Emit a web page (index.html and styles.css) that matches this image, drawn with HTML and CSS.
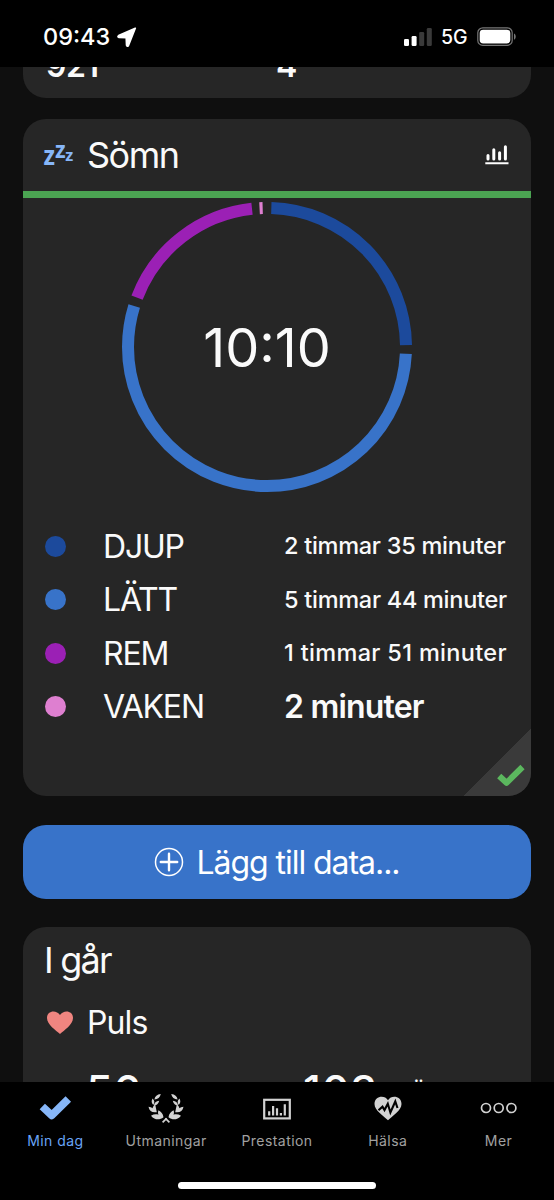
FILE: index.html
```html
<!DOCTYPE html>
<html lang="sv">
<head>
<meta charset="utf-8">
<title>Min dag</title>
<link rel="stylesheet" href="styles.css">
</head>
<body>
<div class="phone">
  <header class="status">
    <div class="status-left">
      <span class="clock">09:43</span>
      <svg class="location" width="20" height="20" viewBox="0 0 20 20"><path d="M18.300 1.200 1.600 8.600c-1 .5-.8 1.700.3 1.800l7.300.3.300 7.600c.1 1.100 1.400 1.300 1.900.3z" fill="#fff" stroke="#fff" stroke-width="1.600" stroke-linejoin="round"/></svg>
    </div>
    <div class="status-right">
      <svg class="signal" width="28" height="18" viewBox="0 0 28 18"><rect x="0" y="11" width="5" height="7" rx="1.300" fill="#fff"/><rect x="7.600" y="8" width="5" height="10" rx="1.300" fill="#fff"/><rect x="15.200" y="4" width="5" height="14" rx="1.300" fill="#3a3a3a"/><rect x="22.800" y="0" width="5" height="18" rx="1.300" fill="#3a3a3a"/></svg>
      <span class="network">5G</span>
      <svg class="battery" width="40" height="20" viewBox="0 0 40 20"><rect x=".8" y=".8" width="34.400" height="17.600" rx="5" fill="none" stroke="#777" stroke-width="1.200"/><rect x="2.700" y="2.700" width="30.600" height="13.800" rx="3.400" fill="#fff"/><path d="M37 6.500c2.300 1 2.300 5.200 0 6.200z" fill="#777"/></svg>
    </div>
  </header>

  <main class="feed">
    <section class="card card-prev">
      <span class="stat">921</span><span class="stat">4</span>
    </section>

    <section class="card card-sleep">
      <div class="card-head">
        <svg class="zzz" width="44" height="26" viewBox="0 0 44 26" fill="#86b6f8">
          <text class="z" font-size="26.500" transform="translate(.6 22.700) scale(.88 1)">z</text>
          <text class="z" font-size="22.500" transform="translate(12 15.600) scale(.96 1)">z</text>
          <text class="z" font-size="16.500" transform="translate(22.200 18.800) scale(.98 1)">z</text>
        </svg>
        <h2 class="title sleep-title">Sömn</h2>
        <svg class="chart-icon" width="24" height="20" viewBox="0 0 24 20"><g stroke="#fff" stroke-width="3" stroke-linecap="round"><path d="M3 10.500v3.600M8.800 4.800v9.300M14.600 7.800v6.300M20.400 1.800v12.300"/></g><path d="M.3 18.300h23.200" stroke="#fff" stroke-width="1.900"/></svg>
      </div>
      <div class="ring">
        <svg class="ring-svg" width="290" height="290" viewBox="0 0 290 290">
          <g class="arcs" transform="rotate(-90 145 145)" fill="none" stroke-width="12">
            <circle cx="145" cy="145" r="139" pathLength="360" stroke="#1c4a9c" stroke-dasharray="87.400 272.600" stroke-dashoffset="-1.800"/>
            <circle cx="145" cy="145" r="139" pathLength="360" stroke="#3873c9" stroke-dasharray="194.400 165.600" stroke-dashoffset="-92.800"/>
            <circle cx="145" cy="145" r="139" pathLength="360" stroke="#9b20b5" stroke-dasharray="63 297" stroke-dashoffset="-290.800"/>
            <circle cx="145" cy="145" r="139" pathLength="360" stroke="#de7fd0" stroke-dasharray="1.300 358.700" stroke-dashoffset="-356.900"/>
          </g>
        </svg>
        <span class="total">10:10</span>
      </div>
      <ul class="legend">
        <li class="row"><i class="dot deep"></i><span class="name">DJUP</span><span class="value">2 timmar 35 minuter</span></li>
        <li class="row"><i class="dot light"></i><span class="name">LÄTT</span><span class="value">5 timmar 44 minuter</span></li>
        <li class="row"><i class="dot rem"></i><span class="name">REM</span><span class="value wide">1 timmar 51 minuter</span></li>
        <li class="row"><i class="dot awake"></i><span class="name">VAKEN</span><span class="value large">2 minuter</span></li>
      </ul>
      <div class="corner">
        <svg class="corner-check" width="30" height="24" viewBox="0 0 30 24"><path d="M3.200 13 10.500 19.800 26.500 4" fill="none" stroke="#5bb75e" stroke-width="6" stroke-linejoin="round"/></svg>
      </div>
    </section>

    <button class="add">
      <svg class="plus" width="30" height="30" viewBox="0 0 30 30" fill="none" stroke="#fff"><circle cx="15" cy="15" r="13.500" stroke-width="1.500"/><path d="M15 6.800v16.400M6.800 15h16.400" stroke-width="2.400" stroke-linecap="round"/></svg>
      <span class="add-text">Lägg till data...</span>
    </button>

    <section class="card card-yesterday">
      <h2 class="title day">I går</h2>
      <div class="pulse-head">
        <svg class="heart" width="28" height="24" viewBox="0 0 28 24"><path d="M14 23C10 19.500 1 13.500 1 7c0-7.500 9.500-8.400 13-2.900C17.500-1.400 27-.5 27 7c0 6.500-9 12.500-13 16z" fill="#f08580"/></svg>
        <span class="pulse-name">Puls</span>
      </div>
      <div class="pulse-values"><span class="big low">56</span><span class="big high">103</span><span class="unit">HÖG</span></div>
    </section>
  </main>

  <nav class="tabs">
    <a class="tab active"><svg class="tab-icon" width="40" height="32" viewBox="0 0 40 32"><path d="M6.500 16.500 16 25.300 32.500 9" transform="translate(.8 -2)" fill="none" stroke="#86b6f8" stroke-width="7.800" stroke-linejoin="round"/></svg><span class="tab-label">Min dag</span></a>
    <a class="tab"><svg class="tab-icon" width="40" height="32" viewBox="0 0 40 32">
      <defs><g id="branch"><path d="M14.800 2C11 2.500 9 4.300 8.400 7.500 12 7.200 14 5.500 14.800 2zM6.500 6.500c-1.400 2.700-1 4.600.8 6.500 1.600-2.200 1.400-4.500-.8-6.500zM13.200 8.700c-3.200.4-5 2-5.300 4.700 2.800 0 4.600-1.700 5.300-4.700zM2.500 14.700c.8 4.300 3.700 6.300 8.300 5.500l-1.600-7.700c-2 1.500-2.400 2.500-2.500 3.700-1.200-.8-2.500-1.400-4.200-1.500zM5 23.700c3.800 4.500 8.500 4.700 12.500 1.500-.5-3.500-2.400-5.700-5-7-.7 1.700-.6 3.100 0 4.500-2.500-.7-5-.4-7.500 1z"/><path d="M16.600 30.400 20.600 26.400" fill="none" stroke="#d2d2d2" stroke-width="1.700"/></g></defs>
      <g fill="#d2d2d2"><use href="#branch"/><use href="#branch" transform="matrix(-1 0 0 1 40 0)"/></g></svg><span class="tab-label">Utmaningar</span></a>
    <a class="tab"><svg class="tab-icon" width="40" height="32" viewBox="0 0 40 32"><rect x="7.200" y="7.800" width="25.600" height="18.600" fill="none" stroke="#d2d2d2" stroke-width="2.200"/><path d="M12.200 19.300v4.200M16.100 14v9.500M20 16.300v7.200M23.900 21v2.500M27.800 12.300v11.200" stroke="#d2d2d2" stroke-width="2.200"/></svg><span class="tab-label">Prestation</span></a>
    <a class="tab"><svg class="tab-icon" width="40" height="32" viewBox="0 0 40 32"><path d="M20 28.200C16 24.200 6.500 18.700 6.500 12 6.500 4.200 16.500 2.500 20 8.300c3.500-5.800 13.500-4.100 13.500 3.700C33.500 18.700 24 24.200 20 28.200z" fill="#d2d2d2"/><path d="M10.500 18.200 14.500 14.700l2 3.300L19.800 11.700l2.600 8.800L27.300 9.500l2.200 6.500" fill="none" stroke="#000" stroke-width="2.100"/></svg><span class="tab-label">Hälsa</span></a>
    <a class="tab"><svg class="tab-icon" width="40" height="32" viewBox="0 0 40 32" fill="none" stroke="#d2d2d2" stroke-width="1.700"><circle cx="7" cy="16" r="4.500"/><circle cx="19.700" cy="16" r="4.500"/><circle cx="32.400" cy="16" r="4.500"/></svg><span class="tab-label">Mer</span></a>
    <div class="home-bar"></div>
  </nav>
</div>
</body>
</html>
```
FILE: styles.css
```css
* { box-sizing: border-box; }
body { margin: 0; background: #0f0f0f; color: #fafafa; font-family: Inter, "Liberation Sans", sans-serif; }
.phone { width: 554px; height: 1200px; display: flex; flex-direction: column; overflow: hidden; }

.status { height: 67px; flex: none; background: #000; display: flex; justify-content: space-between; padding: 17px 37px 10px 43px; color: #fff; }
.status-left, .status-right { display: flex; align-items: center; height: 40px; }
.clock { width: 74px; font-size: 23.5px; font-weight: 550; line-height: 40px; letter-spacing: 0; }
.network { width: 36px; margin-left: 9px; font-size: 19.5px; font-weight: 500; line-height: 40px; }

.feed { height: 1015px; flex: none; overflow: hidden; padding: 0 23px; }
.card { background: #262626; border-radius: 23px; }
.card-prev { height: 31px; border-radius: 0 0 23px 23px; display: grid; grid-template-columns: 230px 1fr; padding-left: 23px; overflow: hidden; }
.stat { font-size: 32px; font-weight: 600; line-height: 40px; margin-top: -21.5px; letter-spacing: -.4px; }

.card-sleep { position: relative; height: 677px; margin-top: 21px; overflow: hidden; }
.card-head { height: 78.5px; display: flex; align-items: center; padding: 0 22px 0 20px; border-bottom: 7px solid #4ba452; }
.title { margin: 0; font-size: 36px; font-weight: 375; line-height: 44px; }
.sleep-title { letter-spacing: -1.5px; }
.day { letter-spacing: -1.8px; }
.z { font-family: "Noto Sans", "Open Sans", sans-serif; font-weight: 700; }
.chart-icon { margin-left: auto; }

.ring { display: grid; width: 290px; height: 290px; margin: 4.5px 0 0 99px; place-items: center; }
.ring-svg, .total { grid-area: 1 / 1; }
.total { font-size: 54px; font-weight: 370; line-height: 60px; letter-spacing: 0; padding-top: 1px; }

.legend { list-style: none; margin: 27.5px 0 0; padding: 0; }
.row { height: 53.5px; display: grid; grid-template-columns: 58px 181px 1fr; align-items: center; padding-left: 22px; white-space: nowrap; }
.dot { width: 21px; height: 21px; border-radius: 50%; }
.deep { background: #1c4a9c; }
.light { background: #3873c9; }
.rem { background: #9b20b5; }
.awake { background: #de7fd0; }
.name { font-size: 32px; font-weight: 375; line-height: 40px; letter-spacing: -1.2px; padding-top: 1px; }
.value { font-size: 23.5px; font-weight: 510; line-height: 40px; letter-spacing: -.27px; }
.wide { letter-spacing: .33px; }
.large { font-size: 32px; font-weight: 600; letter-spacing: -.8px; padding-top: 1px; }
.corner { position: absolute; right: 0; bottom: 0; width: 68px; height: 68px; background: linear-gradient(135deg, transparent 50%, #3a3a3a 50.5%); }
.corner-check { position: absolute; left: 33px; top: 35px; }

.add { display: flex; align-items: center; justify-content: center; gap: 13px; width: 508px; height: 74px; margin: 29px 0 28px; padding: 0 1px 0 0; border: 0; border-radius: 23px; background: #3873c9; color: #fff; font-family: inherit; }
.add-text { font-size: 32px; font-weight: 375; line-height: 40px; letter-spacing: -1.05px; padding-top: 2px; }

.card-yesterday { height: 240px; padding: 11px 0 0 21px; }
.pulse-head { display: flex; align-items: center; height: 40px; margin-top: 20.5px; }
.heart { margin-left: 2px; }
.pulse-name { margin-left: 13px; font-size: 32px; font-weight: 375; line-height: 40px; letter-spacing: -.9px; }
.pulse-values { display: flex; height: 50px; margin-top: 22.5px; line-height: 50px; }
.big { font-size: 43px; font-weight: 480; letter-spacing: .8px; }
.low { width: 217px; margin-left: 42px; }
.high { width: 91px; }
.unit { font-size: 22px; line-height: 55px; }

.tabs { height: 118px; flex: none; background: #000; display: grid; grid-template-columns: repeat(5, 110.8px); grid-template-rows: 99.5px 7px; }
.tab { display: flex; flex-direction: column; align-items: center; padding-top: 10px; color: #a0a0a0; }
.tab-icon { flex: none; }
.tab-label { margin-top: 7px; font-size: 14px; font-weight: 430; line-height: 20px; letter-spacing: .45px; }
.active { color: #69a5f7; }
.home-bar { grid-column: 1 / -1; justify-self: center; width: 198px; height: 7px; border-radius: 4px; background: #fff; }
```
